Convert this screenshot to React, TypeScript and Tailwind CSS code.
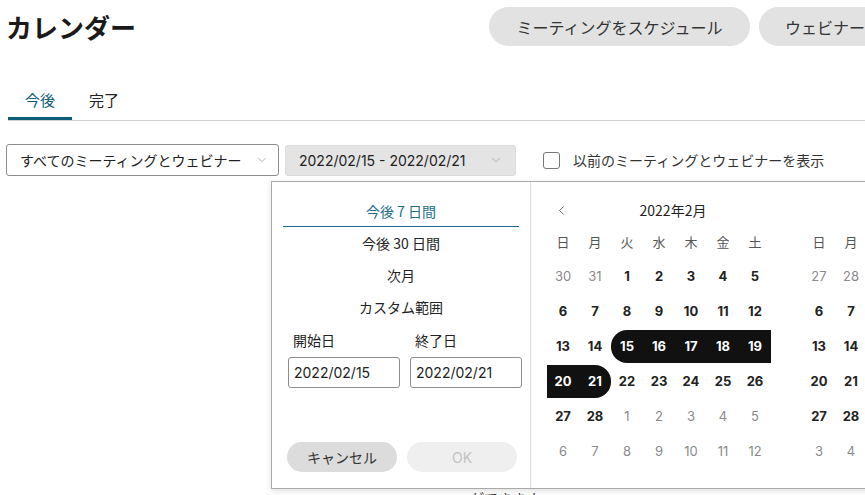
import { ChevronDown, ChevronLeft } from 'lucide-react'

const font = { fontFamily: '"Noto Sans CJK JP", "Noto Sans", sans-serif' }

type Day = { n: number; muted?: boolean }

const feb: Day[][] = [
  [{ n: 30, muted: true }, { n: 31, muted: true }, { n: 1 }, { n: 2 }, { n: 3 }, { n: 4 }, { n: 5 }],
  [{ n: 6 }, { n: 7 }, { n: 8 }, { n: 9 }, { n: 10 }, { n: 11 }, { n: 12 }],
  [{ n: 13 }, { n: 14 }, { n: 15 }, { n: 16 }, { n: 17 }, { n: 18 }, { n: 19 }],
  [{ n: 20 }, { n: 21 }, { n: 22 }, { n: 23 }, { n: 24 }, { n: 25 }, { n: 26 }],
  [{ n: 27 }, { n: 28 }, { n: 1, muted: true }, { n: 2, muted: true }, { n: 3, muted: true }, { n: 4, muted: true }, { n: 5, muted: true }],
  [{ n: 6, muted: true }, { n: 7, muted: true }, { n: 8, muted: true }, { n: 9, muted: true }, { n: 10, muted: true }, { n: 11, muted: true }, { n: 12, muted: true }],
]

const mar: Day[][] = [
  [{ n: 27, muted: true }, { n: 28, muted: true }, { n: 1 }, { n: 2 }, { n: 3 }, { n: 4 }, { n: 5 }],
  [{ n: 6 }, { n: 7 }, { n: 8 }, { n: 9 }, { n: 10 }, { n: 11 }, { n: 12 }],
  [{ n: 13 }, { n: 14 }, { n: 15 }, { n: 16 }, { n: 17 }, { n: 18 }, { n: 19 }],
  [{ n: 20 }, { n: 21 }, { n: 22 }, { n: 23 }, { n: 24 }, { n: 25 }, { n: 26 }],
  [{ n: 27 }, { n: 28 }, { n: 29 }, { n: 30 }, { n: 31 }, { n: 1, muted: true }, { n: 2, muted: true }],
  [{ n: 3, muted: true }, { n: 4, muted: true }, { n: 5, muted: true }, { n: 6, muted: true }, { n: 7, muted: true }, { n: 8, muted: true }, { n: 9, muted: true }],
]

const weekdays = ['日', '月', '火', '水', '木', '金', '土']

const numFont = { fontFamily: 'Inter, Roboto, sans-serif' }

function MonthGrid({ title, rows, showPrev, range }: { title: string; rows: Day[][]; showPrev?: boolean; range?: boolean }) {
  // selected range: row 2 cols 2..6, row 3 cols 0..1
  const selected = (r: number, c: number) => range && ((r === 2 && c >= 2) || (r === 3 && c <= 1))
  return (
    <div className="w-[224px] shrink-0">
      <div className="flex h-[28px] items-center">
        <div className="flex w-[28px] items-center justify-center text-[#555]">
          {showPrev ? <ChevronLeft size={15} strokeWidth={1.5} /> : null}
        </div>
        <div className="flex-1 text-center text-[14px] text-[#222]">{title}</div>
      </div>
      <div className="grid h-[35px] grid-cols-7 items-center">
        {weekdays.map((w) => (
          <div key={w} className="text-center text-[13px] text-[#555]">
            {w}
          </div>
        ))}
      </div>
      {rows.map((row, r) => (
        <div key={r} className="grid h-[35px] grid-cols-7 items-center" style={numFont}>
          {row.map((d, c) => {
            const sel = selected(r, c)
            let shape = ''
            if (sel) {
              shape = 'bg-[#111] text-white font-bold'
              if (r === 2 && c === 2) shape += ' rounded-l-[16px]'
              if (r === 3 && c === 1) shape += ' rounded-r-[16px]'
            } else if (d.muted) {
              shape = 'text-[#8a8a8a]'
            } else {
              shape = 'font-bold text-[#222]'
            }
            return (
              <div key={c} className={`flex h-[33px] items-center justify-center text-[13px] ${shape}`}>
                {d.n}
              </div>
            )
          })}
        </div>
      ))}
    </div>
  )
}

export default function App() {
  return (
    <div className="relative h-[495px] w-[865px] overflow-hidden bg-white text-[#222]" style={font}>
      <div className="flex items-start pl-[6px] pt-[7px]">
        <h1 className="w-[483px] shrink-0 pt-[1px] text-[26px] font-bold leading-[38px] text-[#1a1a1a]">カレンダー</h1>
        <div className="flex shrink-0 gap-[9px]">
          <button type="button" className="h-[39px] w-[261px] rounded-full bg-[#e2e2e2] text-[16px] text-[#333]">
            ミーティングをスケジュール
          </button>
          <button type="button" className="h-[39px] w-[220px] rounded-full bg-[#e2e2e2] pl-[26px] text-left text-[16px] text-[#333]">
            ウェビナーを作成
          </button>
        </div>
      </div>

      <div className="mt-[39px] ml-[8px] flex border-b border-[#cfcfcf]">
        <div className="-mb-px flex h-[35px] w-[64px] items-center justify-center border-b-[3px] border-[#0d5e78] pb-[1px] text-[15px] text-[#0d5e78]">
          今後
        </div>
        <div className="flex h-[35px] w-[64px] items-center justify-center pb-[4px] text-[15px] text-[#222]">完了</div>
      </div>

      <div className="mt-[23px] flex items-center pl-[6px]">
        <div className="flex h-[32px] w-[273px] items-center justify-between rounded-[3px] border border-[#8d8d8d] pl-[13px] pr-[9px] text-[14px] text-[#222]">
          <span>すべてのミーティングとウェビナー</span>
          <ChevronDown size={14} strokeWidth={1.25} className="text-[#999]" />
        </div>
        <div className="ml-[6px] flex h-[31px] w-[231px] items-center justify-between rounded-[3px] border border-[#dcdcdc] bg-[#e4e4e4] pl-[13px] pr-[12px] text-[14px] text-[#222]">
          <span style={numFont}>2022/02/15 - 2022/02/21</span>
          <ChevronDown size={14} strokeWidth={1.25} className="text-[#999]" />
        </div>
        <label className="ml-[27px] flex items-center gap-[13px] text-[14px] text-[#333]">
          <span className="h-[17px] w-[17px] rounded-[3px] border border-[#777] bg-white" />
          以前のミーティングとウェビナーを表示
        </label>
      </div>

      <div className="ml-[355px] mt-[272px] w-[300px] text-center text-[14px] leading-[20px] text-[#333]">
        <p>予定されているミーティングはありません。</p>
        <p>ミーティングをスケジュールすること</p>
        <p>ができます</p>
      </div>

      <div className="absolute left-[271px] top-[181px] flex h-[308px] w-[640px] border border-[#a9a9a9] bg-white shadow-[0_2px_6px_rgba(0,0,0,0.12)]">
        <div className="flex w-[259px] shrink-0 flex-col border-r border-[#dedede] pt-[14px]">
          <div className="mx-[11px] flex h-[31px] items-center justify-center border-b-[1.5px] border-[#1f6d88] text-[14px] text-[#1f6d88]">
            今後 7 日間
          </div>
          <div className="flex h-[32px] items-center justify-center text-[14px]">今後 30 日間</div>
          <div className="flex h-[32px] items-center justify-center text-[14px]">次月</div>
          <div className="flex h-[32px] items-center justify-center text-[14px]">カスタム範囲</div>
          <div className="mt-[5px] flex gap-[10px] pl-[16px]">
            <div className="flex w-[112px] shrink-0 flex-col">
              <span className="pl-[5px] text-[14px] leading-[24px]">開始日</span>
              <div className="mt-[5px] flex h-[31px] items-center rounded-[3px] border border-[#8d8d8d] pl-[5px] text-[14px]" style={numFont}>
                2022/02/15
              </div>
            </div>
            <div className="flex w-[112px] shrink-0 flex-col">
              <span className="pl-[5px] text-[14px] leading-[24px]">終了日</span>
              <div className="mt-[5px] flex h-[31px] items-center rounded-[3px] border border-[#8d8d8d] pl-[5px] text-[14px]" style={numFont}>
                2022/02/21
              </div>
            </div>
          </div>
          <div className="mt-[54px] flex gap-[10px] pl-[15px]">
            <button type="button" className="h-[30px] w-[110px] shrink-0 rounded-full bg-[#dcdcdc] text-[14px] text-[#333]">
              キャンセル
            </button>
            <button type="button" className="h-[30px] w-[110px] shrink-0 rounded-full bg-[#efefef] text-[14px] text-[#c2c2c2]" style={numFont}>
              OK
            </button>
          </div>
        </div>
        <div className="flex gap-[32px] pl-[16px] pt-[14px]">
          <MonthGrid title="2022年2月" rows={feb} showPrev range />
          <MonthGrid title="2022年3月" rows={mar} />
        </div>
      </div>
    </div>
  )
}
